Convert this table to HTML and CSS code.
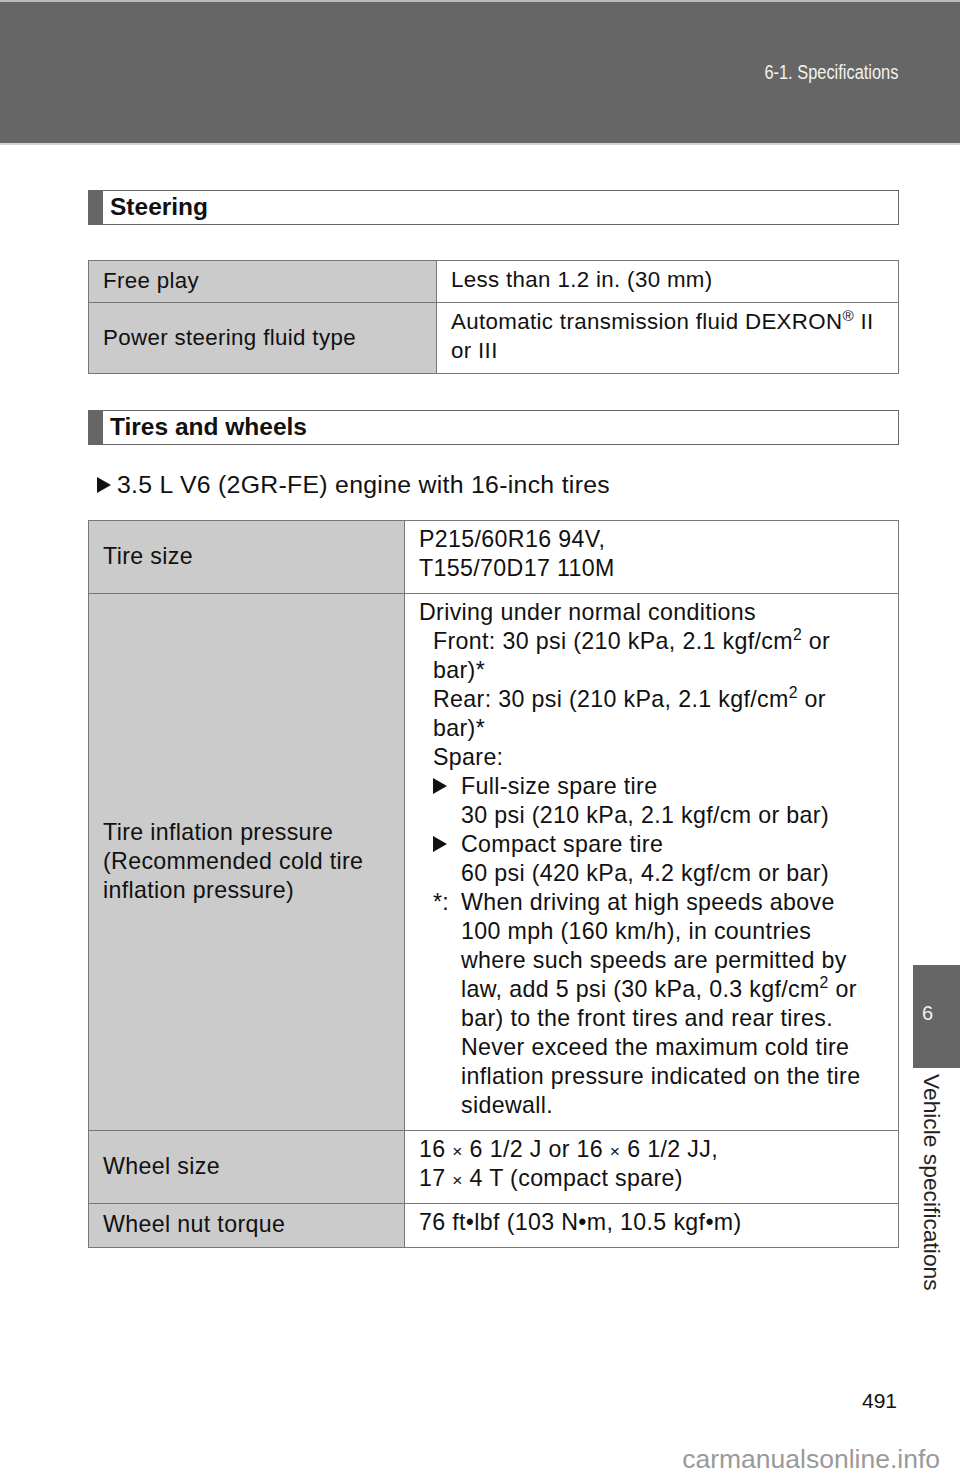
FILE: index.html
```html
<!DOCTYPE html>
<html lang="en">
<head>
  <meta charset="UTF-8">
  <title>6-1. Specifications - 491</title>
  <link rel="stylesheet" href="styles.css">
</head>
<body>
  <div class="top-bar">
    <span class="section-title">6-1. Specifications</span>
  </div>

  <div class="page">
    <div class="content">
      <h2 class="heading"><span class="heading-mark"></span>Steering</h2>

      <table class="spec spec-steering">
        <tr>
          <td class="label">Free play</td>
          <td class="value">Less than 1.2 in. (30 mm)</td>
        </tr>
        <tr>
          <td class="label">Power steering fluid type</td>
          <td class="value">Automatic transmission fluid DEXRON<sup>®</sup> II<br>or III</td>
        </tr>
      </table>

      <h2 class="heading heading-tires"><span class="heading-mark"></span>Tires and wheels</h2>

      <p class="lead"><span class="tri"></span>3.5 L V6 (2GR-FE) engine with 16-inch tires</p>

      <table class="spec spec-tires">
        <tr>
          <td class="label">Tire size</td>
          <td class="value">P215/60R16 94V,<br>T155/70D17 110M</td>
        </tr>
        <tr>
          <td class="label">Tire inflation pressure<br>(Recommended cold tire<br>inflation pressure)</td>
          <td class="value">
            <div>Driving under normal conditions</div>
            <div class="indent">
              <div>Front: 30 psi (210 kPa, 2.1 kgf/cm<sup>2</sup> or<br>bar)*</div>
              <div>Rear: 30 psi (210 kPa, 2.1 kgf/cm<sup>2</sup> or<br>bar)*</div>
              <div>Spare:</div>
              <div class="hang">
                <span class="hang-mark"><span class="tri tri-small"></span></span>
                <span>Full-size spare tire<br>30 psi (210 kPa, 2.1 kgf/cm or bar)</span>
              </div>
              <div class="hang">
                <span class="hang-mark"><span class="tri tri-small"></span></span>
                <span>Compact spare tire<br>60 psi (420 kPa, 4.2 kgf/cm or bar)</span>
              </div>
              <div class="hang">
                <span class="hang-mark note-mark">*:</span>
                <span>When driving at high speeds above<br>100 mph (160 km/h), in countries<br>where such speeds are permitted by<br>law, add 5 psi (30 kPa, 0.3 kgf/cm<sup>2</sup> or<br>bar) to the front tires and rear tires.<br>Never exceed the maximum cold tire<br>inflation pressure indicated on the tire<br>sidewall.</span>
              </div>
            </div>
          </td>
        </tr>
        <tr>
          <td class="label">Wheel size</td>
          <td class="value">16 <span class="times">×</span> 6 1/2 J or 16 <span class="times">×</span> 6 1/2 JJ,<br>17 <span class="times">×</span> 4 T (compact spare)</td>
        </tr>
        <tr>
          <td class="label">Wheel nut torque</td>
          <td class="value">76 ft•lbf (103 N•m, 10.5 kgf•m)</td>
        </tr>
      </table>

      <div class="footer">
        <span class="page-number">491</span>
        <span class="watermark">carmanualsonline.info</span>
      </div>
    </div>

    <div class="side">
      <div class="side-tab">6</div>
      <div class="side-label">Vehicle specifications</div>
    </div>
  </div>
</body>
</html>
```

FILE: styles.css
```css
body {
  margin: 0;
  background: #fff;
  color: #111;
  font-family: "Liberation Sans", Arial, sans-serif;
}

.top-bar {
  height: 141px;
  background-color: #666;
  border-top: 2px solid #bbb;
  border-bottom: 2px solid #d4d4d4;
  display: flex;
  justify-content: flex-end;
  padding-right: 62px;
  box-sizing: content-box;
}

.section-title {
  color: #f2f2f2;
  font-size: 20px;
  margin-top: 59px;
  transform: scaleX(0.82);
  transform-origin: right center;
  white-space: nowrap;
}

.page {
  display: flex;
}

.content {
  width: 811px;
  margin-left: 88px;
}

.heading {
  display: flex;
  align-items: stretch;
  margin: 45px 0 0;
  height: 33px;
  border: 1px solid #666;
  font-size: 24.5px;
  font-weight: bold;
  line-height: 32px;
}

.heading-mark {
  width: 14px;
  background-color: #666;
  margin-right: 7px;
}

.heading-tires {
  margin-top: 36px;
}

.spec {
  width: 100%;
  border-collapse: collapse;
  margin-top: 35px;
  font-size: 22.3px;
  line-height: 29px;
  letter-spacing: 0.35px;
}

.spec td {
  border: 1px solid #777;
  padding: 4px 14px 8px;
}

.spec .label {
  background-color: #cbcbcb;
  vertical-align: middle;
  padding-top: 4px;
  padding-bottom: 6px;
}

.spec .value {
  vertical-align: top;
  white-space: nowrap;
}

.spec-steering .label {
  width: 319px;
}

.spec-tires {
  margin-top: 20px;
  font-size: 23.2px;
}

.spec-tires .label {
  width: 287px;
}

.spec-tires .value {
  padding-bottom: 10px;
}

sup {
  font-size: 0.68em;
  line-height: 0;
  vertical-align: 0.55em;
}

.times {
  font-size: 0.75em;
  line-height: 1;
}

.lead {
  margin: 24px 0 0 9px;
  font-size: 24.8px;
  line-height: 31px;
  letter-spacing: 0.3px;
  display: flex;
  align-items: center;
}

.tri {
  display: inline-block;
  width: 0;
  height: 0;
  border-top: 8px solid transparent;
  border-bottom: 8px solid transparent;
  border-left: 14px solid #111;
  margin-right: 6px;
}

.tri-small {
  display: block;
  margin-right: 0;
}

.indent {
  padding-left: 14px;
}

.hang {
  display: flex;
}

.hang-mark {
  display: flex;
  align-items: flex-start;
  width: 28px;
  flex-shrink: 0;
  padding-top: 6px;
  box-sizing: border-box;
}

.note-mark {
  display: block;
  padding-top: 0;
}

.footer {
  display: flex;
  flex-direction: column;
  align-items: flex-end;
  margin-top: 141px;
  margin-right: -41px;
}

.page-number {
  font-size: 21px;
  line-height: 24px;
  margin-right: 43px;
}

.watermark {
  margin-top: 31px;
  color: #9a9a9a;
  font-size: 26.5px;
  line-height: 30px;
}

.side {
  width: 47px;
  margin-left: 14px;
  padding-top: 820px;
}

.side-tab {
  height: 103px;
  background-color: #666;
  color: #f2f2f2;
  font-size: 20px;
  line-height: 24px;
  padding: 36px 0 0 9px;
  box-sizing: border-box;
}

.side-label {
  writing-mode: vertical-rl;
  font-size: 22.8px;
  line-height: 24px;
  margin: 6px 0 0 7px;
  color: #222;
  white-space: nowrap;
}
```
